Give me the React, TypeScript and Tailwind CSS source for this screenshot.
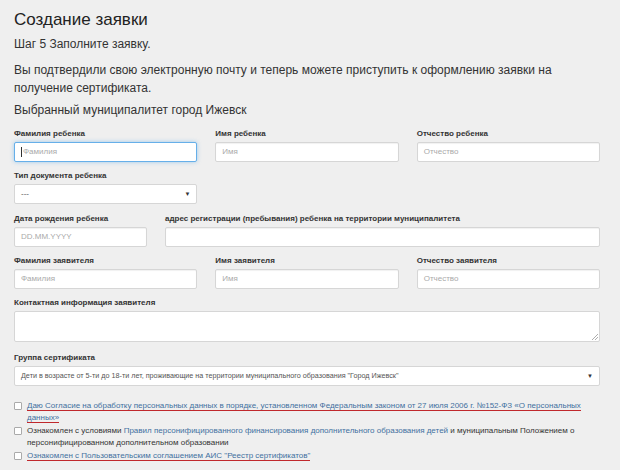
import React from 'react';

const font = { fontFamily: '"Liberation Sans", Arial, sans-serif' };

function Label({ children }: { children: React.ReactNode }) {
  return <div className="text-[8px] font-bold leading-[13px] text-[#333] mb-[2px] whitespace-nowrap">{children}</div>;
}

function Field({ placeholder, focused }: { placeholder?: string; focused?: boolean }) {
  return (
    <div
      className={
        'h-[20px] bg-white rounded-[2px] px-[6px] flex items-center text-[8px] text-[#aaa] ' +
        (focused
          ? 'border border-[#66afe9] shadow-[0_0_4px_rgba(102,175,233,0.6)]'
          : 'border border-[#d6d6d6] shadow-[inset_0_1px_1px_rgba(0,0,0,0.06)]')
      }
    >
      {focused && <span className="w-px h-[10px] bg-[#333] mr-px" />}
      {placeholder}
    </div>
  );
}

function SelectBox({ value, small }: { value: string; small?: boolean }) {
  return (
    <div className="h-[20px] bg-white rounded-[2px] border border-[#d6d6d6] px-[6px] flex items-center justify-between text-[#555]">
      <span className={small ? 'text-[7.2px]' : 'text-[8px]'}>{value}</span>
      <span className="text-[6px] text-[#333]">▼</span>
    </div>
  );
}

function Check() {
  return <span className="mt-[2px] w-[8px] h-[8px] shrink-0 border border-[#aaa] bg-white rounded-[1px]" />;
}

export default function App() {
  return (
    <div className="w-[620px] h-[470px] overflow-hidden bg-[#efefef] text-[#333] pl-[14px] pr-[20px] pt-[8px]" style={font}>
      <h1 className="text-[17px] leading-[24px] text-[#222]">Создание заявки</h1>
      <p className="text-[12px] leading-[16px] mt-[4px]">Шаг 5 Заполните заявку.</p>
      <p className="text-[12px] leading-[18px] mt-[9px] w-[560px]">
        Вы подтвердили свою электронную почту и теперь можете приступить к оформлению заявки на получение сертификата.
      </p>
      <p className="text-[12px] leading-[16px] mt-[5px]">Выбранный муниципалитет город Ижевск</p>

      <div className="grid grid-cols-3 gap-x-[18px] mt-[9px]">
        <div>
          <Label>Фамилия ребенка</Label>
          <Field placeholder="Фамилия" focused />
        </div>
        <div>
          <Label>Имя ребенка</Label>
          <Field placeholder="Имя" />
        </div>
        <div>
          <Label>Отчество ребенка</Label>
          <Field placeholder="Отчество" />
        </div>
      </div>

      <div className="grid grid-cols-3 gap-x-[18px] mt-[7px]">
        <div>
          <Label>Тип документа ребенка</Label>
          <SelectBox value="---" />
        </div>
      </div>

      <div className="grid grid-cols-[133px_1fr] gap-x-[18px] mt-[8px]">
        <div>
          <Label>Дата рождения ребенка</Label>
          <Field placeholder="DD.MM.YYYY" />
        </div>
        <div>
          <Label>адрес регистрации (пребывания) ребенка на территории муниципалитета</Label>
          <Field />
        </div>
      </div>

      <div className="grid grid-cols-3 gap-x-[18px] mt-[7px]">
        <div>
          <Label>Фамилия заявителя</Label>
          <Field placeholder="Фамилия" />
        </div>
        <div>
          <Label>Имя заявителя</Label>
          <Field placeholder="Имя" />
        </div>
        <div>
          <Label>Отчество заявителя</Label>
          <Field placeholder="Отчество" />
        </div>
      </div>

      <div className="mt-[7px]">
        <Label>Контактная информация заявителя</Label>
        <div className="relative h-[31px] bg-white rounded-[2px] border border-[#d6d6d6]">
          <svg className="absolute right-[1px] bottom-[1px]" width="6" height="6" viewBox="0 0 6 6">
            <path d="M6 0 L0 6 M6 3 L3 6" stroke="#999" strokeWidth="0.8" />
          </svg>
        </div>
      </div>

      <div className="mt-[9px]">
        <Label>Группа сертификата</Label>
        <SelectBox small value={'Дети в возрасте от 5-ти до 18-ти лет, проживающие на территории муниципального образования "Город Ижевск"'} />
      </div>

      <div className="mt-[14px] flex flex-col gap-[1px] text-[8px] leading-[12px]">
        <div className="flex gap-[5px]">
          <Check />
          <span className="text-[#3f6fa0]">
            <span className="border-b-[1.5px] border-[#c0282d]">Даю Согласие на обработку персональных данных в порядке, установленном Федеральным законом от 27 июля 2006 г. №152-ФЗ «О персональных данных»</span>
          </span>
        </div>
        <div className="flex gap-[5px]">
          <Check />
          <span>
            Ознакомлен с условиями{' '}
            <span className="text-[#3f6fa0]">Правил персонифицированного финансирования дополнительного образования детей</span>{' '}
            и муниципальным Положением о персонифицированном дополнительном образовании
          </span>
        </div>
        <div className="flex gap-[5px]">
          <Check />
          <span className="text-[#3f6fa0]">
            <span className="border-b-[1.5px] border-[#c0282d]">Ознакомлен с Пользовательским соглашением АИС "Реестр сертификатов"</span>
          </span>
        </div>
      </div>
    </div>
  );
}
